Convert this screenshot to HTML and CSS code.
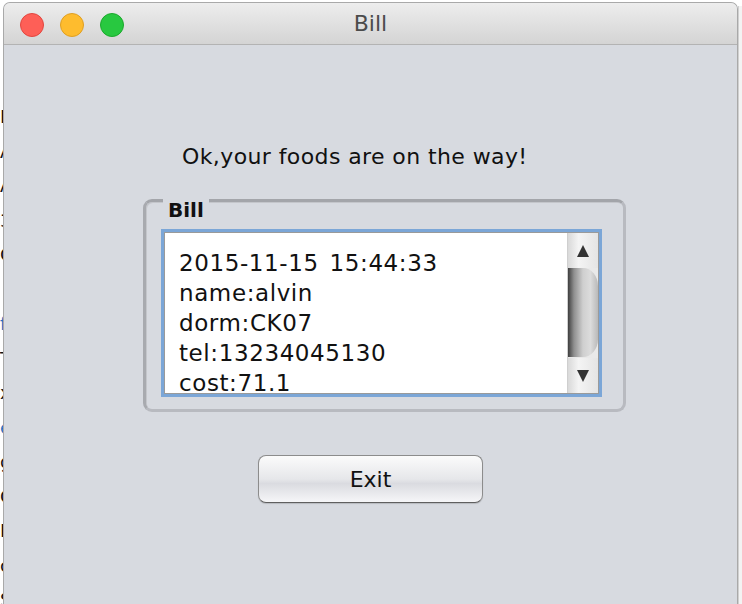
FILE: index.html
```html
<!DOCTYPE html>
<html>
<head>
    <title>Bill</title>
    <link rel="stylesheet" href="styles.css">
</head>
<body>
    <div class="screen">
        <div class="desk">
            <span>F</span><span>A</span><span>A</span><span>3</span><span>C</span><span>&nbsp;</span>
            <span class="link">f</span><span>T</span><span>x</span><span class="link">e</span><span>g</span>
            <span>C</span><span>M</span><span>c</span><span>S</span>
        </div>
        <div class="window">
            <div class="titlebar">
                <div class="lights">
                    <span class="light red"></span>
                    <span class="light yellow"></span>
                    <span class="light green"></span>
                </div>
                <div class="title">Bill</div>
                <div></div>
            </div>
            <div class="content">
                <p class="message">Ok,your foods are on the way!</p>
                <div class="group">
                    <span class="group-title">Bill</span>
                    <div class="textarea">
                        <div class="text">
                            <div>2015-11-15 15:44:33</div>
                            <div>name:alvin</div>
                            <div>dorm:CK07</div>
                            <div>tel:13234045130</div>
                            <div>cost:71.1</div>
                        </div>
                        <div class="scrollbar">
                            <div class="arrow">
                                <svg width="14" height="14" viewBox="0 0 14 14"><polygon points="7,1 13,13 1,13" fill="#333"/></svg>
                            </div>
                            <div class="track"><div class="thumb"></div></div>
                            <div class="arrow">
                                <svg width="14" height="14" viewBox="0 0 14 14"><polygon points="1,1 13,1 7,13" fill="#333"/></svg>
                            </div>
                        </div>
                    </div>
                </div>
                <button class="exit">Exit</button>
            </div>
        </div>
        <div class="desk-right"></div>
    </div>
</body>
</html>
```

FILE: styles.css
```css
body {
    margin: 0;
    background: #ffffff;
    font-family: "DejaVu Sans", "Liberation Sans", sans-serif;
}

.screen {
    display: flex;
    height: 604px;
    overflow: hidden;
}

.desk {
    width: 3px;
    overflow: hidden;
    padding-top: 100px;
    display: flex;
    flex-direction: column;
    font-size: 18px;
    line-height: 34.5px;
    color: #111;
}

.desk .link {
    color: #2a6fc0;
}

.desk-right {
    flex: 1;
    background: #f3f3f3;
    border-left: 1px solid #d0d0d0;
    margin-top: 6px;
}

.window {
    width: 733px;
    margin-top: 2px;
    border: 1px solid #a9a9a9;
    border-bottom: none;
    border-radius: 7px 7px 0 0;
    background: #d7dae0;
    overflow: hidden;
}

.titlebar {
    height: 41px;
    border-bottom: 1px solid #b3b3b3;
    background: linear-gradient(#ededed, #d4d4d4);
    display: grid;
    grid-template-columns: 1fr auto 1fr;
    align-items: center;
}

.lights {
    display: flex;
    gap: 16px;
    padding-left: 16px;
    padding-top: 2px;
}

.light {
    width: 22px;
    height: 22px;
    border-radius: 50%;
}

.red {
    background: #fe5f57;
    border: 1px solid #e2463f;
}

.yellow {
    background: #febc2e;
    border: 1px solid #df9f22;
}

.green {
    background: #28c840;
    border: 1px solid #1ba92c;
}

.title {
    font-size: 22px;
    color: #4b4b4b;
}

.content {
    display: flex;
    flex-direction: column;
    align-items: flex-start;
}

.message {
    margin: 99px 0 0 178px;
    font-size: 22px;
    line-height: 26px;
    letter-spacing: 0.4px;
    color: #111;
}

.group {
    margin: 29px 0 0 139px;
    width: 477px;
    height: 207px;
    border: 3px solid #b8bac0;
    border-top-color: #a3a5aa;
    border-left-color: #a8aaaf;
    border-radius: 9px;
    box-shadow: inset 1px 1px 0 #c4c6cb;
}

.group-title {
    display: inline-block;
    margin: -6px 0 0 17px;
    padding: 0 5px;
    background: #d7dae0;
    font-size: 20px;
    font-weight: bold;
    line-height: 22px;
    color: #111;
}

.textarea {
    margin: 11px 0 0 18px;
    width: 433px;
    height: 160px;
    border: 1px solid #9a9a9a;
    outline: 3px solid #7ba6d7;
    display: flex;
    background: #ffffff;
}

.text {
    flex: 1;
    overflow: hidden;
    padding: 15px 0 0 14px;
    font-size: 23px;
    line-height: 30px;
    letter-spacing: 0.6px;
    word-spacing: 3px;
    color: #111;
}

.scrollbar {
    width: 30px;
    display: flex;
    flex-direction: column;
    background: #e6e6e6;
    border-left: 1px solid #cfcfcf;
}

.arrow {
    height: 35px;
    display: flex;
    align-items: center;
    justify-content: center;
    background: linear-gradient(to right, #d9d9d9, #f4f4f4 35%, #e4e4e4);
}

.track {
    flex: 1;
    background: #e9e9e9;
}

.thumb {
    height: 89px;
    border-radius: 0 15px 15px 0 / 0 18px 18px 0;
    background: linear-gradient(to right, #3f3f3f, #8f8f8f 20%, #cfcfcf 50%, #dcdcdc 75%, #b9b9b9);
}

.exit {
    margin: 43px 0 0 254px;
    width: 225px;
    height: 48px;
    border: 1px solid #8c8c8c;
    border-bottom-color: #5f5f5f;
    border-radius: 8px;
    background: linear-gradient(#fbfbfb, #e6e7ea 50%, #dadbe0 60%, #f6f6f8);
    box-shadow: 0 1px 1px rgba(0, 0, 0, 0.15);
    font-family: "DejaVu Sans", "Liberation Sans", sans-serif;
    font-size: 22px;
    color: #111;
    padding: 0;
}
```
